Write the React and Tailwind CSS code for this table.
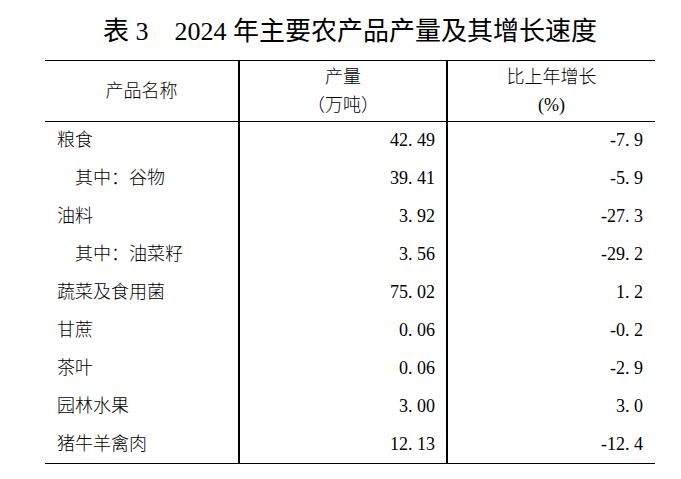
const rows = [
  { name: '粮食', qty: '42.49', growth: '-7.9' },
  { name: '其中：谷物', qty: '39.41', growth: '-5.9', sub: true },
  { name: '油料', qty: '3.92', growth: '-27.3' },
  { name: '其中：油菜籽', qty: '3.56', growth: '-29.2', sub: true },
  { name: '蔬菜及食用菌', qty: '75.02', growth: '1.2' },
  { name: '甘蔗', qty: '0.06', growth: '-0.2' },
  { name: '茶叶', qty: '0.06', growth: '-2.9' },
  { name: '园林水果', qty: '3.00', growth: '3.0' },
  { name: '猪牛羊禽肉', qty: '12.13', growth: '-12.4' },
];

// SimSun style numbers: the period takes half an em
const Num = ({ value }) => {
  const [a, b] = value.split('.');
  return (
    <span>
      {a}
      <span className="inline-block w-[0.5em] text-left">.</span>
      {b}
    </span>
  );
};

export default function App() {
  return (
    <div className="w-[681px] h-[479px] bg-white text-black font-['Liberation_Serif','Noto_Sans_CJK_SC',serif]">
      <div className="ml-[45px] w-[610px]">
        <h1 className="h-[60px] pt-[3px] flex items-center justify-center text-[26px] font-normal">
          <span>表 3</span>
          <span className="ml-[26px]">2024 年主要农产品产量及其增长速度</span>
        </h1>

        <table className="w-full border-collapse text-[18px] font-light">
          <colgroup>
            <col className="w-[194px]" />
            <col className="w-[208px]" />
            <col className="w-[208px]" />
          </colgroup>
          <thead>
            <tr className="h-[61px] border-y border-black">
              <th className="font-light text-center align-middle">产品名称</th>
              <th className="font-light text-center align-middle leading-[28px] border-x-2 border-black">
                <div>产量</div>
                <div>（万吨）</div>
              </th>
              <th className="font-light text-center align-middle leading-[28px]">
                <div>比上年增长</div>
                <div>(%)</div>
              </th>
            </tr>
          </thead>
          <tbody className="border-b border-black">
            {rows.map((row) => (
              <tr key={row.name} className="h-[38px]">
                <td className={row.sub ? 'pl-[30px]' : 'pl-3'}>{row.name}</td>
                <td className="text-right pr-[11px] border-x-2 border-black">
                  <Num value={row.qty} />
                </td>
                <td className="text-right pr-[12px]">
                  <Num value={row.growth} />
                </td>
              </tr>
            ))}
          </tbody>
        </table>
      </div>
    </div>
  );
}
